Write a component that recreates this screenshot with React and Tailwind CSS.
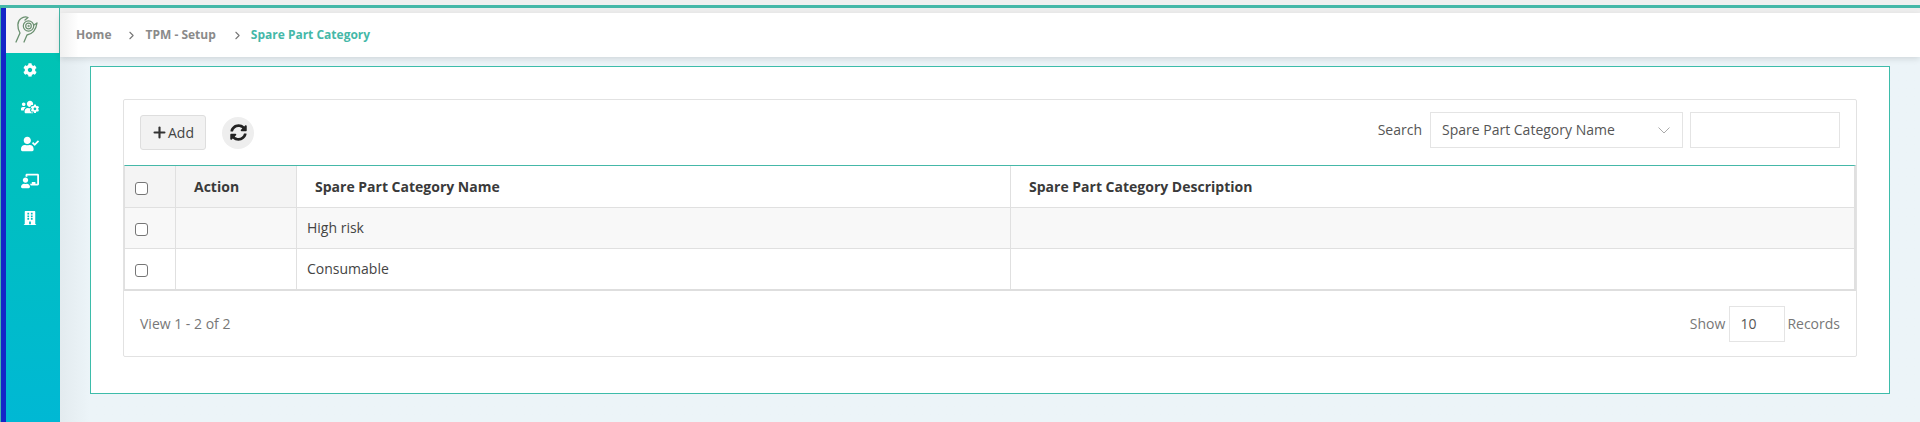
import React from 'react';
import { FaCog, FaUsersCog, FaUserCheck, FaChalkboardTeacher, FaBuilding, FaSyncAlt } from 'react-icons/fa';
import { ChevronRight, Plus } from 'lucide-react';

const font = { fontFamily: '"Open Sans", sans-serif' };

const Logo = () => (
  <svg width="24" height="28" viewBox="0 0 24 28" fill="none" stroke="#6a9070" strokeWidth="1.3" strokeLinecap="round" strokeLinejoin="round">
    <path d="M1 27 L5 18 C2 13 2 6 6 3.5 C8 2 11 1.5 13 2.5 L10 5" />
    <path d="M9 27 L12 20 C17 19 21 15 22 8 L19 10" />
    <circle cx="13.5" cy="11" r="5.2" strokeWidth="1.2" />
    <circle cx="13.5" cy="11" r="2.8" strokeWidth="1.2" />
    <circle cx="13.5" cy="11" r="0.8" fill="#6a9070" strokeWidth="0.5" />
  </svg>
);

const navIcons = [
  { Icon: FaCog, size: 14 },
  { Icon: FaUsersCog, size: 18 },
  { Icon: FaUserCheck, size: 18 },
  { Icon: FaChalkboardTeacher, size: 18 },
  { Icon: FaBuilding, size: 14 },
];

const Sidebar = () => (
  <aside className="w-[60px] h-full flex shrink-0 bg-[#45b8a8]">
    <div className="w-[5px] ml-px bg-[#1426c8]" />
    <div className="flex-1 flex flex-col bg-gradient-to-b from-[#00c4b0] to-[#00b8d4]">
      <div className="h-[45px] flex items-center justify-center pr-[11px] pb-[3px] bg-[#f5f5f5] border-r border-[#45b8a8]">
        <Logo />
      </div>
      <div className="flex flex-col items-center text-white -mt-[2px] pr-[6px]">
        {navIcons.map(({ Icon, size }, i) => (
          <div key={i} className="h-[37px] w-full flex items-center justify-center">
            <Icon size={size} />
          </div>
        ))}
      </div>
    </div>
  </aside>
);

const Breadcrumb = () => (
  <div className="h-[44px] flex items-center pl-4 bg-gradient-to-r from-[#f0f0f0] via-white via-[1%] to-white shadow-[0_2px_6px_rgba(0,0,0,0.12)] text-xs font-bold text-[#8a8a8a] relative">
    <span>Home</span>
    <ChevronRight size={13} strokeWidth={2} className="ml-[14px] mr-[7px] text-[#777]" />
    <span>TPM - Setup</span>
    <ChevronRight size={13} strokeWidth={2} className="ml-[15px] mr-[7px] text-[#777]" />
    <span className="text-[#45b8a8]">Spare Part Category</span>
  </div>
);

const Toolbar = () => (
  <div className="h-[65px] flex items-center justify-between pl-4 pr-4">
    <div className="flex items-center">
      <button className="w-[66px] h-[35px] flex items-center justify-center gap-[1px] bg-[#f2f2f2] border border-[#dedede] rounded-[3px] text-sm text-[#444]">
        <Plus size={17} strokeWidth={3} className="text-[#333] -mx-px" />
        Add
      </button>
      <div className="ml-4 w-8 h-8 rounded-full bg-[#eeeeee] flex items-center justify-center text-[#222]">
        <FaSyncAlt size={17} />
      </div>
    </div>
    <div className="flex items-center pb-[5px]">
      <span className="text-sm text-[#555] mr-2">Search</span>
      <div className="w-[253px] h-[36px] border border-[#e4e4e4] flex items-center justify-between pl-[11px] pr-[12px] text-sm text-[#555]">
        Spare Part Category Name
        <svg width="12" height="7" viewBox="0 0 12 7" fill="none" stroke="#aaaaaa" strokeWidth="1">
          <path d="M0.5 0.5 L6 6 L11.5 0.5" />
        </svg>
      </div>
      <div className="ml-[7px] w-[150px] h-[36px] border border-[#e4e4e4]" />
    </div>
  </div>
);

const Check = () => (
  <span className="block w-[13px] h-[13px] border border-[#767676] rounded-[3px] bg-white" />
);

const Row = ({ name, rowClass, height, last }) => (
  <div className={`flex ${height} ${last ? '' : 'border-b border-[#e0e0e0]'} ${rowClass}`}>
    <div className="w-[51px] flex items-center pl-[10px] pt-[3px] border-r border-[#e0e0e0]"><Check /></div>
    <div className="w-[121px] border-r border-[#e0e0e0]" />
    <div className="w-[714px] flex items-center pl-[10px] border-r border-[#e0e0e0] text-sm text-[#444]">{name}</div>
    <div className="flex-1" />
  </div>
);

const Table = () => (
  <div className="border-t border-t-[#45b8a8] border-b-2 border-b-[#dedede] border-l border-l-[#e0e0e0] border-r-2 border-r-[#e0e0e0]">
    <div className="flex h-[42px] bg-[#f4f4f4] border-b border-[#e0e0e0] text-sm font-bold text-[#3a3a3a]">
      <div className="w-[51px] flex items-center pl-[10px] pt-[4px] border-r border-[#e0e0e0]"><Check /></div>
      <div className="w-[121px] flex items-center pl-[18px] border-r border-[#e0e0e0]">Action</div>
      <div className="w-[714px] flex items-center pl-[18px] border-r border-[#e0e0e0] bg-white">Spare Part Category Name</div>
      <div className="flex-1 flex items-center pl-[18px] bg-white">Spare Part Category Description</div>
    </div>
    <Row name="High risk" rowClass="bg-[#f8f8f8]" height="h-[41px]" />
    <Row name="Consumable" rowClass="bg-white" height="h-[40px]" last />
  </div>
);

const Footer = () => (
  <div className="h-[65px] flex items-center justify-between pl-4 pr-4 text-sm text-[#777]">
    <span>View 1 - 2 of 2</span>
    <div className="flex items-center">
      <span>Show</span>
      <div className="ml-[4px] mr-[2px] w-[56px] h-[36px] border border-[#e4e4e4] flex items-center pl-[10px] text-[#555]">10</div>
      <span>Records</span>
    </div>
  </div>
);

export default function App() {
  return (
    <div style={font} className="w-[1920px] h-[422px] overflow-hidden flex flex-col bg-[#ecf4f8]">
      <div className="h-[5px] bg-[#f0f0f0] shrink-0" />
      <div className="h-[3px] bg-[#45b8a8] shrink-0" />
      <div className="flex flex-1 min-h-0">
        <Sidebar />
        <main className="flex-1 min-w-0 bg-gradient-to-r from-[#e3ebef] to-[#ecf4f8] to-[30px]">
          <div className="h-[5px] bg-[#eeeeee]" />
          <Breadcrumb />
          <section className="mt-[9px] mx-[30px] h-[328px] bg-white border border-[#3dbcaa] pt-[32px] px-[32px]">
            <div className="h-[258px] border border-[#e2e2e2] rounded-[2px]">
              <Toolbar />
              <Table />
              <Footer />
            </div>
          </section>
        </main>
      </div>
    </div>
  );
}
